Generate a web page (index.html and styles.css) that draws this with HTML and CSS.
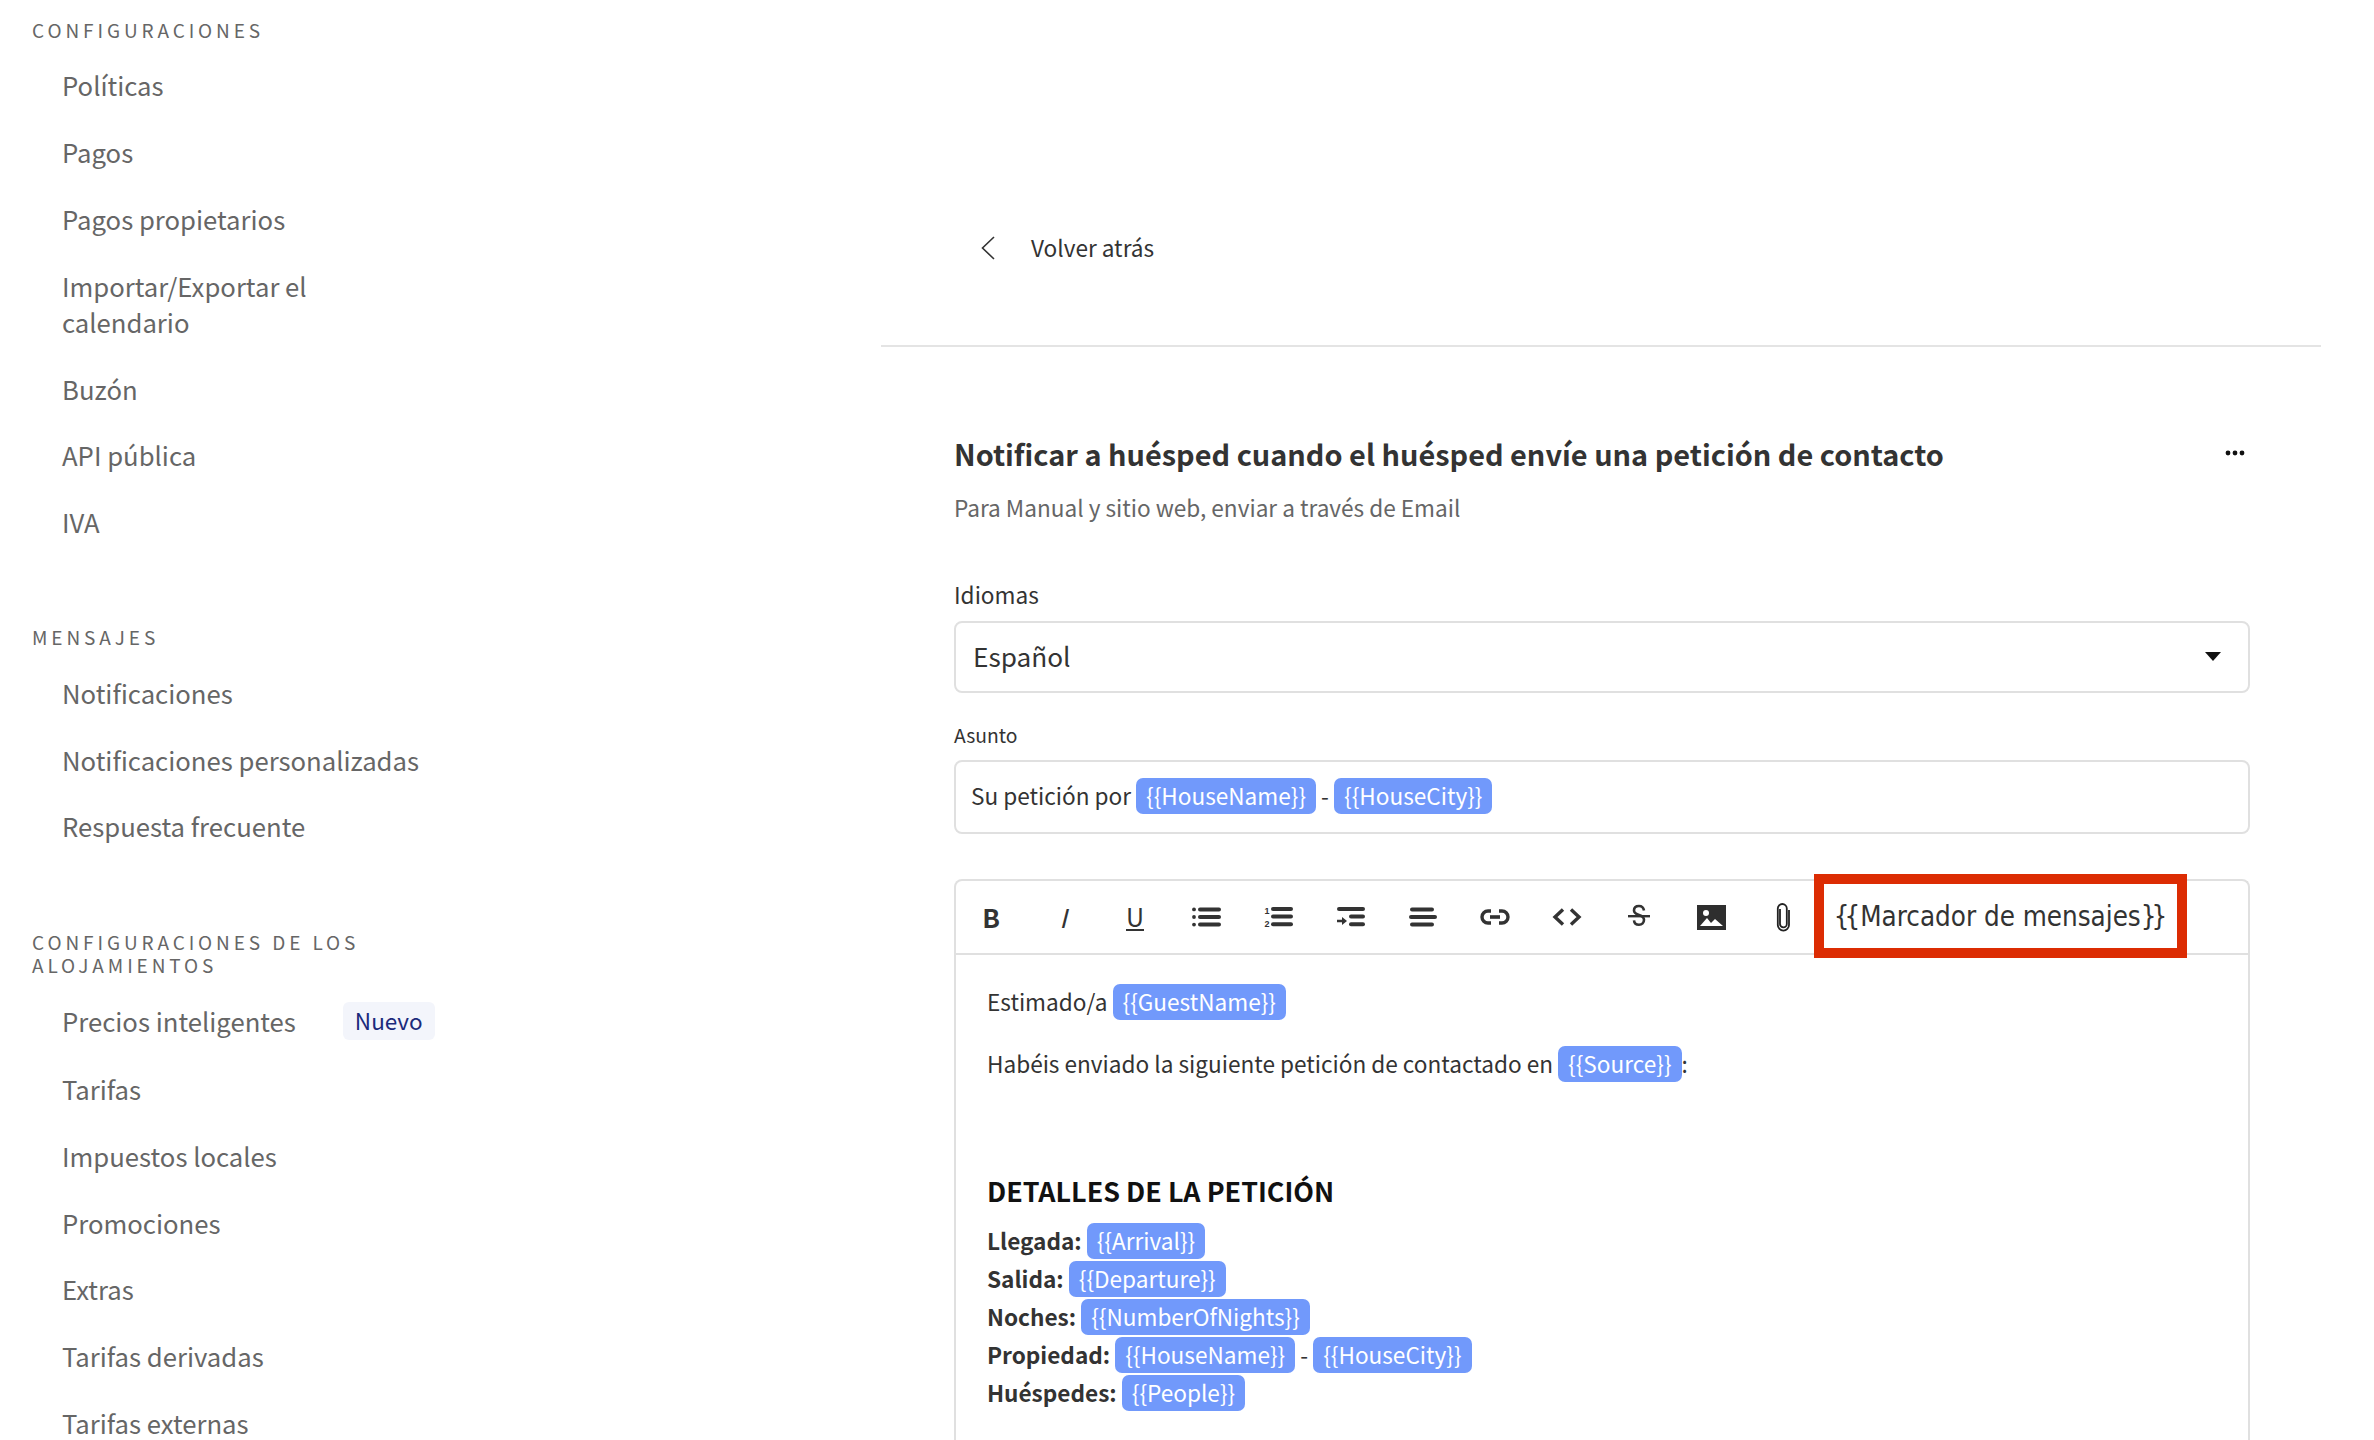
FILE: index.html
```html
<!DOCTYPE html>
<html lang="es">
<head>
<meta charset="utf-8">
<title>Notificaciones</title>
<link rel="stylesheet" href="styles.css">
</head>
<body>
<div class="page">
  <aside class="sidebar">
    <section class="group">
      <h3 class="group-title">CONFIGURACIONES</h3>
      <ul class="menu">
        <li>Políticas</li>
        <li>Pagos</li>
        <li>Pagos propietarios</li>
        <li>Importar/Exportar el calendario</li>
        <li>Buzón</li>
        <li>API pública</li>
        <li>IVA</li>
      </ul>
    </section>
    <section class="group">
      <h3 class="group-title">MENSAJES</h3>
      <ul class="menu">
        <li>Notificaciones</li>
        <li>Notificaciones personalizadas</li>
        <li>Respuesta frecuente</li>
      </ul>
    </section>
    <section class="group">
      <h3 class="group-title narrow">CONFIGURACIONES DE LOS ALOJAMIENTOS</h3>
      <ul class="menu">
        <li class="with-badge">Precios inteligentes <span class="badge">Nuevo</span></li>
        <li>Tarifas</li>
        <li>Impuestos locales</li>
        <li>Promociones</li>
        <li>Extras</li>
        <li>Tarifas derivadas</li>
        <li>Tarifas externas</li>
      </ul>
    </section>
  </aside>

  <main class="main">
    <div class="back">
      <svg class="back-icon" viewBox="0 0 16 24" width="16" height="24"><path d="M14 1 2.500 12 14 23" fill="none" stroke="#333" stroke-width="1.600"/></svg>
      <span>Volver atrás</span>
    </div>
    <div class="content">
      <div class="title-row">
        <h1 class="title">Notificar a huésped cuando el huésped envíe una petición de contacto</h1>
        <svg class="dots" viewBox="0 0 20 6" width="20" height="6"><circle cx="3" cy="3" r="2.400"/><circle cx="10" cy="3" r="2.400"/><circle cx="17" cy="3" r="2.400"/></svg>
      </div>
      <p class="subtitle">Para Manual y sitio web, enviar a través de Email</p>

      <label class="label">Idiomas</label>
      <div class="select">
        <span>Español</span>
        <svg viewBox="0 0 16 9" width="16" height="9"><path d="M0 0h16L8 9z" fill="#111"/></svg>
      </div>

      <label class="label small">Asunto</label>
      <div class="subject"><p class="line">Su petición por <span class="token">{{HouseName}}</span> - <span class="token">{{HouseCity}}</span></p></div>

      <div class="editor">
        <div class="toolbar">
          <span class="tool"><span class="t-b">B</span></span>
          <span class="tool"><span class="t-i">I</span></span>
          <span class="tool"><span class="t-u">U</span></span>
          <span class="tool"><svg viewBox="0 0 30 20" width="30" height="20"><g fill="#333"><circle cx="2" cy="2.400" r="1.900"/><circle cx="2" cy="10" r="1.900"/><circle cx="2" cy="17.600" r="1.900"/><rect x="6" y="0.400" width="23" height="4" rx="2"/><rect x="6" y="8" width="23" height="4" rx="2"/><rect x="6" y="15.600" width="23" height="4" rx="2"/></g></svg></span>
          <span class="tool"><svg viewBox="0 0 30 22" width="30" height="22"><g fill="#333"><rect x="7" y="1" width="22" height="4" rx="2"/><rect x="7" y="8.600" width="22" height="4" rx="2"/><rect x="7" y="16.200" width="22" height="4" rx="2"/></g><text x="0.500" y="8" class="ol-num">1</text><text x="0.500" y="20.500" class="ol-num">2</text></svg></span>
          <span class="tool"><svg viewBox="0 0 30 22" width="30" height="22"><g fill="#333"><rect x="1" y="1" width="28" height="4" rx="2"/><rect x="13" y="8.600" width="16" height="4" rx="2"/><rect x="13" y="16.200" width="16" height="4" rx="2"/><path d="M1 13.800h5V11l5 4-5 4v-2.800H1z"/></g></svg></span>
          <span class="tool"><svg viewBox="0 0 30 20" width="30" height="20"><g fill="#333"><rect x="2" y="0.400" width="24" height="4" rx="2"/><rect x="1" y="8" width="28" height="4" rx="2"/><rect x="2" y="15.600" width="24" height="4" rx="2"/></g></svg></span>
          <span class="tool"><svg viewBox="0 0 30 18" width="30" height="18"><path d="M11 3H8a6 6 0 0 0 0 12h3M19 3h3a6 6 0 0 1 0 12h-3" fill="none" stroke="#333" stroke-width="3.400"/><rect x="10" y="7.200" width="10" height="3.600" fill="#333"/></svg></span>
          <span class="tool"><svg viewBox="0 0 30 20" width="30" height="20"><path d="M11 2.500 3 10l8 7.500M19 2.500l8 7.500-8 7.500" fill="none" stroke="#333" stroke-width="3.400"/></svg></span>
          <span class="tool"><svg viewBox="0 0 24 26" width="24" height="26"><path d="M17 6.500c-.5-3-2.500-4.500-5-4.500-3 0-5 1.800-5 4.500 0 2.500 2 3.500 5 4.500 3 1 5 2.200 5 4.800 0 3-2 5-5 5-2.700 0-4.700-1.500-5-4.500" fill="none" stroke="#333" stroke-width="2.600"/><rect x="1" y="11" width="22" height="2.400" fill="#333"/></svg></span>
          <span class="tool"><svg viewBox="0 0 29 25" width="29" height="25"><rect width="29" height="25" fill="#2e2e2e"/><circle cx="9" cy="8" r="3" fill="#fff"/><path d="M3 21 10 13l4 5 4-4 8 7z" fill="#fff"/></svg></span>
          <span class="tool"><svg viewBox="0 0 16 29" width="16" height="29"><path d="M5 6v15a3.400 3.400 0 0 0 6.800 0V5.500a4.500 4.500 0 0 0-9 0V22a5.600 5.600 0 0 0 11.200 0V7" fill="none" stroke="#222" stroke-width="1.800"/></svg></span>
        </div>
        <div class="marker"><span class="brace">{{</span>Marcador de mensajes<span class="brace">}}</span></div>
        <div class="body">
          <p class="line">Estimado/a <span class="token">{{GuestName}}</span></p>
          <p class="line gap">Habéis enviado la siguiente petición de contactado en <span class="token">{{Source}}</span>:</p>
          <h2 class="heading">DETALLES DE LA PETICIÓN</h2>
          <div class="details">
            <p class="line"><b>Llegada:</b> <span class="token">{{Arrival}}</span></p>
            <p class="line"><b>Salida:</b> <span class="token">{{Departure}}</span></p>
            <p class="line"><b>Noches:</b> <span class="token">{{NumberOfNights}}</span></p>
            <p class="line"><b>Propiedad:</b> <span class="token">{{HouseName}}</span> - <span class="token">{{HouseCity}}</span></p>
            <p class="line"><b>Huéspedes:</b> <span class="token">{{People}}</span></p>
          </div>
        </div>
      </div>
    </div>
  </main>
</div>
</body>
</html>
```
FILE: styles.css
```css
* { box-sizing: border-box; }
html, body { margin: 0; height: 100%; overflow: hidden; background: #fff; }
body { font-family: "Noto Sans CJK JP", "Noto Sans", sans-serif; color: #333; }
.page { display: flex; height: 1440px; overflow: hidden; }

/* Sidebar */
.sidebar { width: 881px; flex: none; padding: 18px 0 0 32px; }
.group { margin-bottom: 70px; }
.group-title { margin: 0 0 11px; font-size: 19px; line-height: 23px; font-weight: 400; letter-spacing: 3.900px; color: #666; }
.group-title.narrow { width: 400px; }
.menu { list-style: none; margin: 0; padding: 0 0 0 30px; width: 398px; }
.menu li { font-size: 25.700px; line-height: 36px; padding: 15.400px 0; color: #666; }
.menu .with-badge { display: flex; align-items: center; white-space: nowrap; }
.badge { margin-left: 47px; height: 38px; line-height: 36px; padding: 0 12px; border-radius: 6px; background: #f3f5fb; color: #1b2a7b; font-size: 22.500px; }

/* Main */
.main { width: 1440px; flex: none; }
.back { height: 347px; padding: 150px 0 0 99px; display: flex; align-items: center; gap: 35px; border-bottom: 2px solid #e4e4e4; font-size: 22.600px; line-height: 34px; color: #333; }
.back-icon { flex: none; }
.content { padding: 84px 71px 0 73px; }
.title-row { display: flex; justify-content: space-between; align-items: center; }
.title { margin: 0; font-size: 28.900px; line-height: 44px; font-weight: 700; color: #333; }
.dots { margin-right: 5px; fill: #111; }
.subtitle { margin: 16px 0 54px; font-size: 22.600px; line-height: 34px; color: #666; }
.label { display: block; font-size: 22.600px; line-height: 32px; color: #333; margin-bottom: 10px; }
.label.small { font-size: 19.300px; line-height: 28px; margin: 28px 0 11px; }
.select { height: 72px; border: 2px solid #e0e0e0; border-radius: 8px; padding: 0 27px 2px 17px; display: flex; align-items: center; justify-content: space-between; font-size: 26.200px; line-height: 36px; color: #333; }
.subject { height: 74px; border: 2px solid #e0e0e0; border-radius: 8px; padding: 0 15px 2px; display: flex; align-items: center; }
.token { display: inline-block; height: 36px; line-height: 36px; padding: 0 10px; border-radius: 7px; background: #7199fb; color: #fff; font-size: 22.600px; font-weight: 400; }

/* Editor */
.editor { position: relative; margin-top: 45px; height: 900px; border: 2px solid #e0e0e0; border-bottom: 0; border-radius: 8px 8px 0 0; }
.toolbar { height: 74px; display: flex; align-items: center; border-bottom: 2px solid #e0e0e0; }
.tool { width: 72px; flex: none; display: flex; align-items: center; justify-content: center; }
.tool:first-child { margin-left: -1px; }
.t-b, .t-i, .t-u { font-family: "Noto Sans CJK JP", sans-serif; font-size: 26px; line-height: 30px; color: #333; }
.t-b { font-weight: 700; }
.t-i { font-style: italic; }
.t-u { border-bottom: 2px solid #333; line-height: 26px; font-size: 25px; }
.ol-num { font-family: "Liberation Sans", sans-serif; font-size: 9px; font-weight: 700; fill: #333; }
.marker { position: absolute; left: 858px; top: -7px; width: 373px; height: 84px; border: 10px solid #dc2c03; background: #fff; display: flex; align-items: center; justify-content: center; font-family: "DejaVu Sans Condensed", "DejaVu Sans", sans-serif; font-stretch: condensed; font-size: 27.500px; color: #333; white-space: pre; }
.brace { letter-spacing: -5px; margin-right: 5px; }
.body { padding: 28px 31px; }
.line { margin: 0; height: 38px; line-height: 38px; font-size: 22.600px; color: #333; white-space: pre-wrap; }
.line b { font-weight: 700; }
.line.gap { margin-top: 24px; }
.heading { margin: 88px 0 11px; font-size: 26.900px; line-height: 40px; font-weight: 700; color: #111; }
```
